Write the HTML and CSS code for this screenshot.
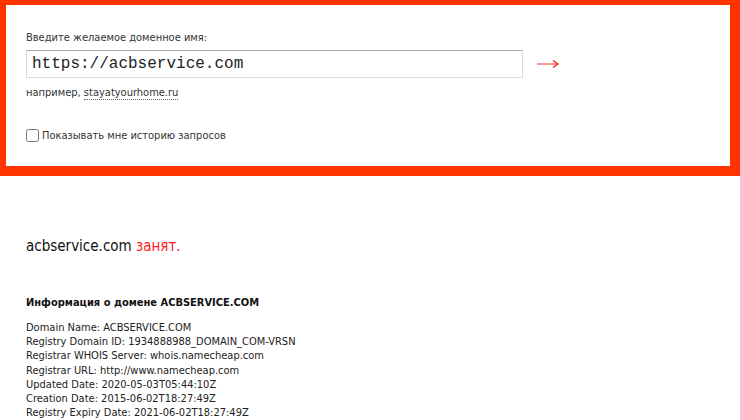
FILE: index.html
```html
<!DOCTYPE html>
<html lang="ru">
<head>
    <meta charset="UTF-8">
    <title>Whois</title>
    <link rel="stylesheet" href="styles.css">
</head>
<body>
    <div class="search-box">
        <label class="search-label" for="domain">Введите желаемое доменное имя:</label>
        <div class="search-row">
            <input type="text" id="domain" class="search-input" value="https://acbservice.com">
            <button class="search-go" type="submit" aria-label="Проверить">
                <svg width="24" height="12" viewBox="0 0 24 12">
                    <line x1="1" y1="6" x2="21" y2="6" stroke="#ff8080" stroke-width="1.6"/>
                    <path d="M17 2.5 L22 6 L17 9.5" fill="none" stroke="#ff2020" stroke-width="1.4"/>
                </svg>
            </button>
        </div>
        <p class="search-hint">например, <a href="#">stayatyourhome.ru</a></p>
        <label class="history"><input type="checkbox"> Показывать мне историю запросов</label>
    </div>

    <div class="result">
        <p class="status">acbservice.com <span class="busy">занят.</span></p>

        <h3>Информация о домене ACBSERVICE.COM</h3>
        <div class="whois">
            Domain Name: ACBSERVICE.COM<br>
            Registry Domain ID: 1934888988_DOMAIN_COM-VRSN<br>
            Registrar WHOIS Server: whois.namecheap.com<br>
            Registrar URL: http://www.namecheap.com<br>
            Updated Date: 2020-05-03T05:44:10Z<br>
            Creation Date: 2015-06-02T18:27:49Z<br>
            Registry Expiry Date: 2021-06-02T18:27:49Z
        </div>
    </div>
</body>
</html>
```

FILE: styles.css
```css
body {
    font-family: "DejaVu Sans Condensed", "DejaVu Sans", sans-serif;
    font-size: 11px;
    color: #222;
    margin: 0;
    overflow: hidden;
}

.search-box {
    margin: -5px 0 0 -4px;
    border: 10px solid #ff3300;
    padding: 26px 20px 24px 20px;
    background: #fff;
}

.search-label {
    display: block;
    color: #333;
    line-height: 14px;
}

.search-row {
    display: flex;
    align-items: center;
    margin-top: 5px;
}

.search-input {
    width: 497px;
    height: 28px;
    box-sizing: border-box;
    border: 1px solid #dcdce0;
    border-top-color: #a8a8b0;
    padding: 0 5px;
    font-family: "Liberation Mono", monospace;
    font-size: 16px;
    color: #222;
    outline: none;
}

.search-go {
    margin-left: 13px;
    padding: 0;
    border: 0;
    background: none;
    cursor: pointer;
    display: flex;
}

.search-hint {
    margin: 8px 0 0;
    line-height: 14px;
    color: #333;
}

.search-hint a {
    color: #333;
    text-decoration: none;
    border-bottom: 1px dotted #666;
}

.history {
    display: flex;
    align-items: center;
    margin-top: 29px;
    color: #333;
}

.history input {
    margin: 0 3px 0 0;
    width: 13px;
    height: 13px;
}

.result {
    padding: 61px 26px 0;
}

.status {
    font-size: 15px;
    margin: 0;
    color: #111;
}

.busy {
    color: #ff2020;
}

h3 {
    font-size: 11px;
    margin: 41px 0 12px;
    color: #111;
}

.whois {
    line-height: 14.2px;
    color: #222;
}
```
